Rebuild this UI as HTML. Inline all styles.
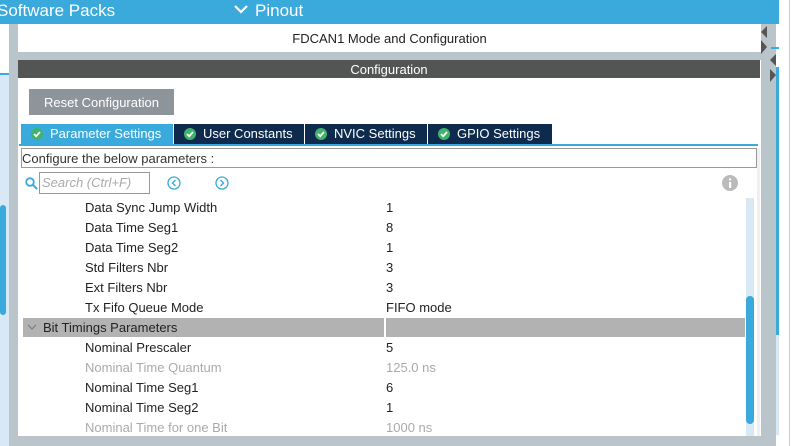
<!DOCTYPE html>
<html><head><style>
*{margin:0;padding:0;box-sizing:border-box}
body{width:792px;height:446px;overflow:hidden;background:#fff;font-family:"Liberation Sans",Arial,sans-serif;position:relative;font-size:13px;color:#222}
.a{position:absolute}
.t{position:absolute;white-space:nowrap;line-height:20px}
.tab{position:absolute;top:124px;height:20px;color:#fff;font-size:13px;line-height:20px;background:#0e2a4d}
.tab svg{position:absolute;left:10px;top:4px}
.tab span{position:absolute;left:29px}
</style></head><body>
<div class="a" style="left:0;top:0;width:779px;height:24px;background:#3aa9dc"></div>
<div class="t" style="left:-3px;top:0;line-height:22px;color:#fff;font-size:17px">Software Packs</div>
<svg class="a" style="left:234px;top:5px" width="14" height="10"><path d="M1 1 L7 7 L13 1" stroke="#fff" stroke-width="2.2" fill="none"/></svg>
<div class="t" style="left:255px;top:0;line-height:22px;color:#fff;font-size:17px">Pinout</div>
<div class="a" style="left:789px;top:0;width:1px;height:446px;background:#ccc"></div>
<div class="a" style="left:0;top:24px;width:9px;height:422px;background:#fff"></div>
<div class="a" style="left:0;top:74px;width:9px;height:372px;background:#d8e8f4"></div>
<div class="a" style="left:0;top:73px;width:9px;height:2px;background:#3aa9dc"></div>
<div class="a" style="left:0;top:205px;width:6px;height:110px;background:#3aa9dc;border-radius:3px"></div>
<div class="a" style="left:9px;top:24px;width:9px;height:422px;background:#b9c4cb"></div>
<div class="a" style="left:18px;top:436px;width:743px;height:10px;background:#b9c4cb"></div>
<div class="a" style="left:18px;top:52px;width:743px;height:8px;background:#b9c4cb"></div>
<div class="t" style="left:18px;top:29px;width:743px;text-align:center">FDCAN1 Mode and Configuration</div>
<div class="a" style="left:18px;top:60px;width:742px;height:18px;background:#535554"></div>
<div class="t" style="left:18px;top:61px;width:742px;text-align:center;color:#fff;line-height:18px">Configuration</div>
<div class="a" style="left:29px;top:89px;width:145px;height:26px;background:#8d949a;color:#fff;text-align:center;line-height:27px">Reset Configuration</div>
<div class="tab" style="left:21px;width:152px;background:#3aa9dc"><svg width="12" height="12"><circle cx="6" cy="6" r="6" fill="#3fb36b"/><path d="M3 6 L5.2 8.2 L9 4" stroke="#fff" stroke-width="1.8" fill="none"/></svg><span>Parameter Settings</span></div>
<div class="tab" style="left:174px;width:130px"><svg width="12" height="12"><circle cx="6" cy="6" r="6" fill="#3fb36b"/><path d="M3 6 L5.2 8.2 L9 4" stroke="#fff" stroke-width="1.8" fill="none"/></svg><span>User Constants</span></div>
<div class="tab" style="left:305px;width:122px"><svg width="12" height="12"><circle cx="6" cy="6" r="6" fill="#3fb36b"/><path d="M3 6 L5.2 8.2 L9 4" stroke="#fff" stroke-width="1.8" fill="none"/></svg><span>NVIC Settings</span></div>
<div class="tab" style="left:428px;width:124px"><svg width="12" height="12"><circle cx="6" cy="6" r="6" fill="#3fb36b"/><path d="M3 6 L5.2 8.2 L9 4" stroke="#fff" stroke-width="1.8" fill="none"/></svg><span>GPIO Settings</span></div>
<div class="a" style="left:19px;top:144px;width:739px;height:2px;background:#3aa9dc"></div>
<div class="a" style="left:21px;top:148px;width:736px;height:20px;border:1px solid #999"></div>
<div class="t" style="left:22px;top:149px;line-height:19px;color:#333">Configure the below parameters :</div>
<svg class="a" style="left:25px;top:177px" width="13" height="13"><circle cx="5" cy="5" r="3.8" stroke="#3aa9dc" stroke-width="1.8" fill="none"/><path d="M8 8 L12 12" stroke="#3aa9dc" stroke-width="2"/></svg>
<div class="a" style="left:39px;top:172px;width:111px;height:22px;border:1px solid #999"></div>
<div class="t" style="left:42px;top:173px;color:#aaa;font-style:italic">Search (Ctrl+F)</div>
<svg class="a" style="left:167px;top:176px" width="14" height="14"><circle cx="7" cy="7" r="6" stroke="#3aa9dc" stroke-width="1.3" fill="none"/><path d="M8.5 4 L5.5 7 L8.5 10" stroke="#3aa9dc" stroke-width="1.4" fill="none"/></svg>
<svg class="a" style="left:215px;top:176px" width="14" height="14"><circle cx="7" cy="7" r="6" stroke="#3aa9dc" stroke-width="1.3" fill="none"/><path d="M5.5 4 L8.5 7 L5.5 10" stroke="#3aa9dc" stroke-width="1.4" fill="none"/></svg>
<svg class="a" style="left:722px;top:175px" width="16" height="16"><circle cx="8" cy="8" r="8" fill="#bbb"/><rect x="7" y="7" width="2.2" height="6" fill="#fff"/><circle cx="8.1" cy="4.5" r="1.2" fill="#fff"/></svg>
<div class="t" style="left:85px;top:198px">Data Sync Jump Width</div><div class="t" style="left:386px;top:198px">1</div>
<div class="t" style="left:85px;top:218px">Data Time Seg1</div><div class="t" style="left:386px;top:218px">8</div>
<div class="t" style="left:85px;top:238px">Data Time Seg2</div><div class="t" style="left:386px;top:238px">1</div>
<div class="t" style="left:85px;top:258px">Std Filters Nbr</div><div class="t" style="left:386px;top:258px">3</div>
<div class="t" style="left:85px;top:278px">Ext Filters Nbr</div><div class="t" style="left:386px;top:278px">3</div>
<div class="t" style="left:85px;top:298px">Tx Fifo Queue Mode</div><div class="t" style="left:386px;top:298px">FIFO mode</div>
<div class="a" style="left:23px;top:318px;width:722px;height:19px;background:#b2b2b2"></div>
<div class="a" style="left:384px;top:318px;width:2px;height:19px;background:#fff"></div>
<svg class="a" style="left:27px;top:324px" width="10" height="7"><path d="M1 1 L5 5 L9 1" stroke="#777" stroke-width="1" fill="none"/></svg>
<div class="t" style="left:43px;top:318px">Bit Timings Parameters</div>
<div class="t" style="left:85px;top:338px">Nominal Prescaler</div><div class="t" style="left:386px;top:338px">5</div>
<div class="t" style="left:85px;top:358px;color:#aaa">Nominal Time Quantum</div><div class="t" style="left:386px;top:358px;color:#aaa">125.0 ns</div>
<div class="t" style="left:85px;top:378px">Nominal Time Seg1</div><div class="t" style="left:386px;top:378px">6</div>
<div class="t" style="left:85px;top:398px">Nominal Time Seg2</div><div class="t" style="left:386px;top:398px">1</div>
<div class="t" style="left:85px;top:418px;color:#aaa">Nominal Time for one Bit</div><div class="t" style="left:386px;top:418px;color:#aaa">1000 ns</div>
<div class="a" style="left:18px;top:436px;width:743px;height:10px;background:#b9c4cb"></div>
<div class="a" style="left:746px;top:198px;width:8px;height:238px;background:#d8e8f4"></div>
<div class="a" style="left:746px;top:296px;width:8px;height:128px;background:#3aa9dc;border-radius:4px"></div>
<div class="a" style="left:757px;top:148px;width:3px;height:288px;background:#f0f0f0"></div>
<div class="a" style="left:761px;top:24px;width:15px;height:422px;background:#b9c4cb"></div>
<div class="a" style="left:776px;top:67px;width:3px;height:268px;background:#3aa9dc"></div>
<div class="a" style="left:776px;top:335px;width:3px;height:100px;background:#d8e8f4"></div>
<div class="a" style="left:771px;top:47px;width:8px;height:2px;background:#3aa9dc"></div>
<svg class="a" style="left:760px;top:24px" width="20" height="60"><path d="M7 2 L1 8 L7 14Z" fill="#555"/><path d="M1 16 L7 23 L1 30Z" fill="#555"/><path d="M16 30 L10 36 L16 42Z" fill="#555"/><path d="M10 45 L16 51 L10 58Z" fill="#555"/></svg>
</body></html>
